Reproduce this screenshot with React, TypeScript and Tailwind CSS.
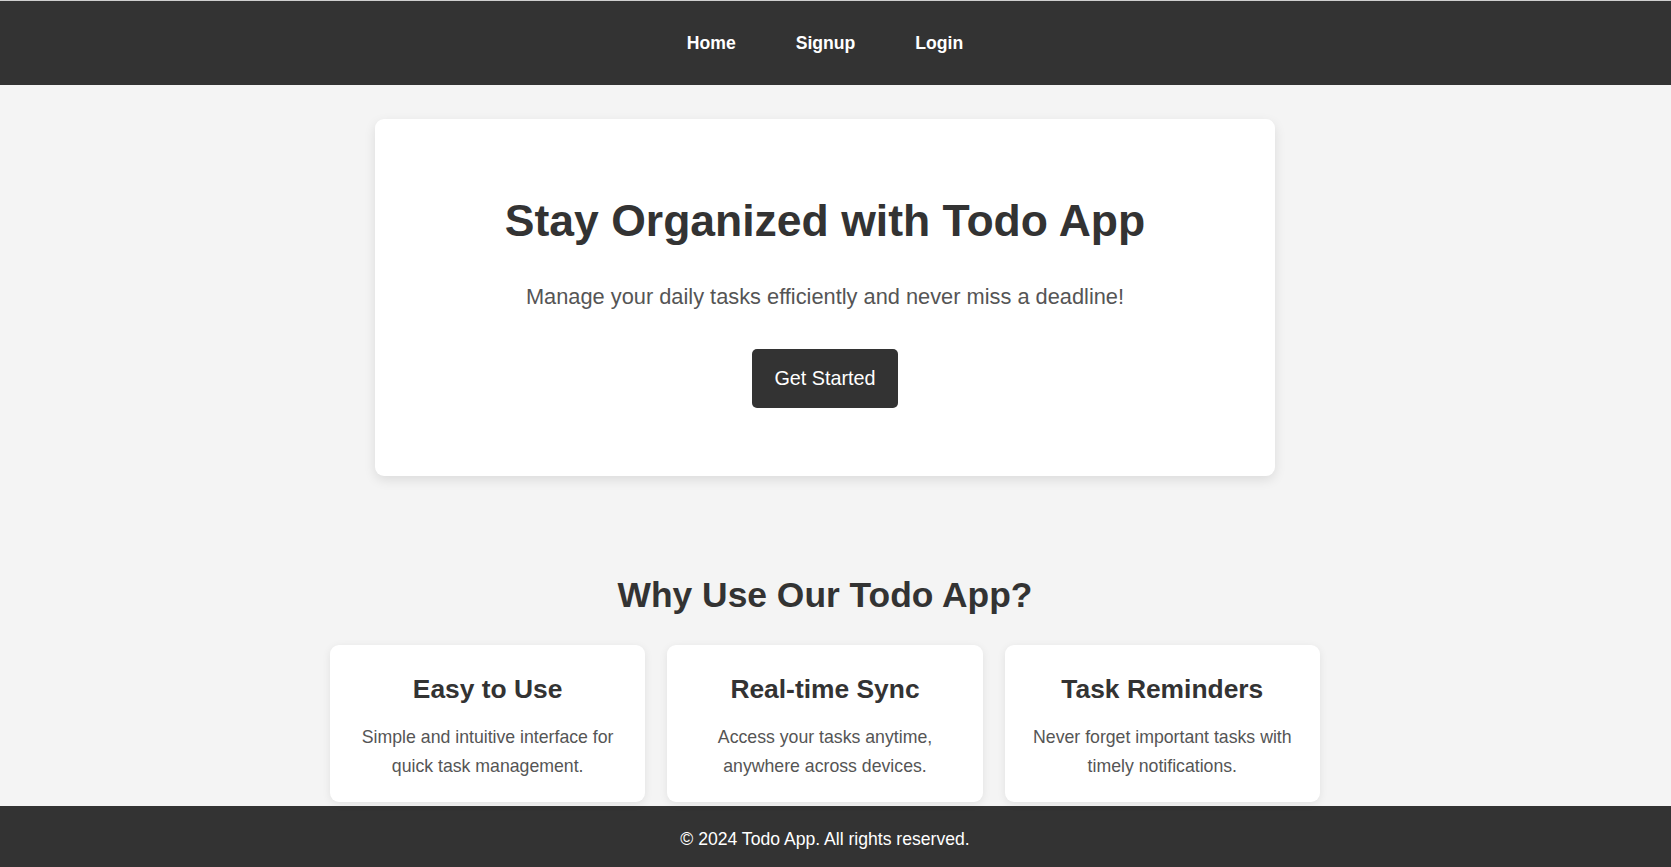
import React from "react";

const features = [
  {
    title: "Easy to Use",
    text: ["Simple and intuitive interface for", "quick task management."],
  },
  {
    title: "Real-time Sync",
    text: ["Access your tasks anytime,", "anywhere across devices."],
  },
  {
    title: "Task Reminders",
    text: ["Never forget important tasks with", "timely notifications."],
  },
];

export default function App() {
  return (
    <div className="min-h-screen bg-[#f4f4f4] font-['Liberation_Sans',Arial,sans-serif] text-[#333]">
      {/* Header */}
      <div className="h-px bg-[#cfcfcf]" />
      <header className="h-[84px] bg-[#333] pr-[21px] flex items-center justify-center">
        <nav className="flex gap-[60px] pb-[1px]">
          <a className="text-[17.6px] font-bold text-white leading-[20px]">Home</a>
          <a className="text-[17.6px] font-bold text-white leading-[20px]">Signup</a>
          <a className="text-[17.6px] font-bold text-white leading-[20px]">Login</a>
        </nav>
      </header>

      {/* Hero */}
      <main className="pr-[21px] flex flex-col items-center">
        <section className="mt-[34px] w-[900px] h-[357px] bg-white rounded-[9px] shadow-[0_4px_12px_rgba(0,0,0,0.1)] pt-[77px] flex flex-col items-center text-center">
          <h1 className="text-[44.5px] leading-[50px] font-bold text-[#333]">
            Stay Organized with Todo App
          </h1>
          <p className="mt-[38px] text-[21.8px] leading-[26px] text-[#555]">
            Manage your daily tasks efficiently and never miss a deadline!
          </p>
          <button className="mt-[38.6px] w-[146px] h-[59px] rounded-[5px] bg-[#333] text-white text-[19.8px] leading-[23px] flex items-center justify-center">
            Get Started
          </button>
        </section>

        {/* Features */}
        <h2 className="mt-[98.5px] text-[35.4px] leading-[40px] font-bold text-[#333]">
          Why Use Our Todo App?
        </h2>
        <div className="mt-[30.5px] w-[990px] grid grid-cols-3 gap-[22px]">
          {features.map((f) => (
            <div
              key={f.title}
              className="h-[157px] bg-white rounded-[9px] shadow-[0_2px_8px_rgba(0,0,0,0.08)] pt-[28.6px] flex flex-col items-center text-center"
            >
              <h3 className="text-[26.4px] leading-[30px] font-bold text-[#333]">
                {f.title}
              </h3>
              <p className="mt-[19.8px] text-[17.7px] leading-[29px] text-[#555]">
                {f.text[0]}
                <br />
                {f.text[1]}
              </p>
            </div>
          ))}
        </div>
      </main>

      {/* Footer */}
      <footer className="mt-[4.3px] bg-[#333] pr-[21px] pt-[23px] pb-[22px] flex justify-center">
        <p className="text-[17.6px] leading-[20px] text-white">
          © 2024 Todo App. All rights reserved.
        </p>
      </footer>
    </div>
  );
}
